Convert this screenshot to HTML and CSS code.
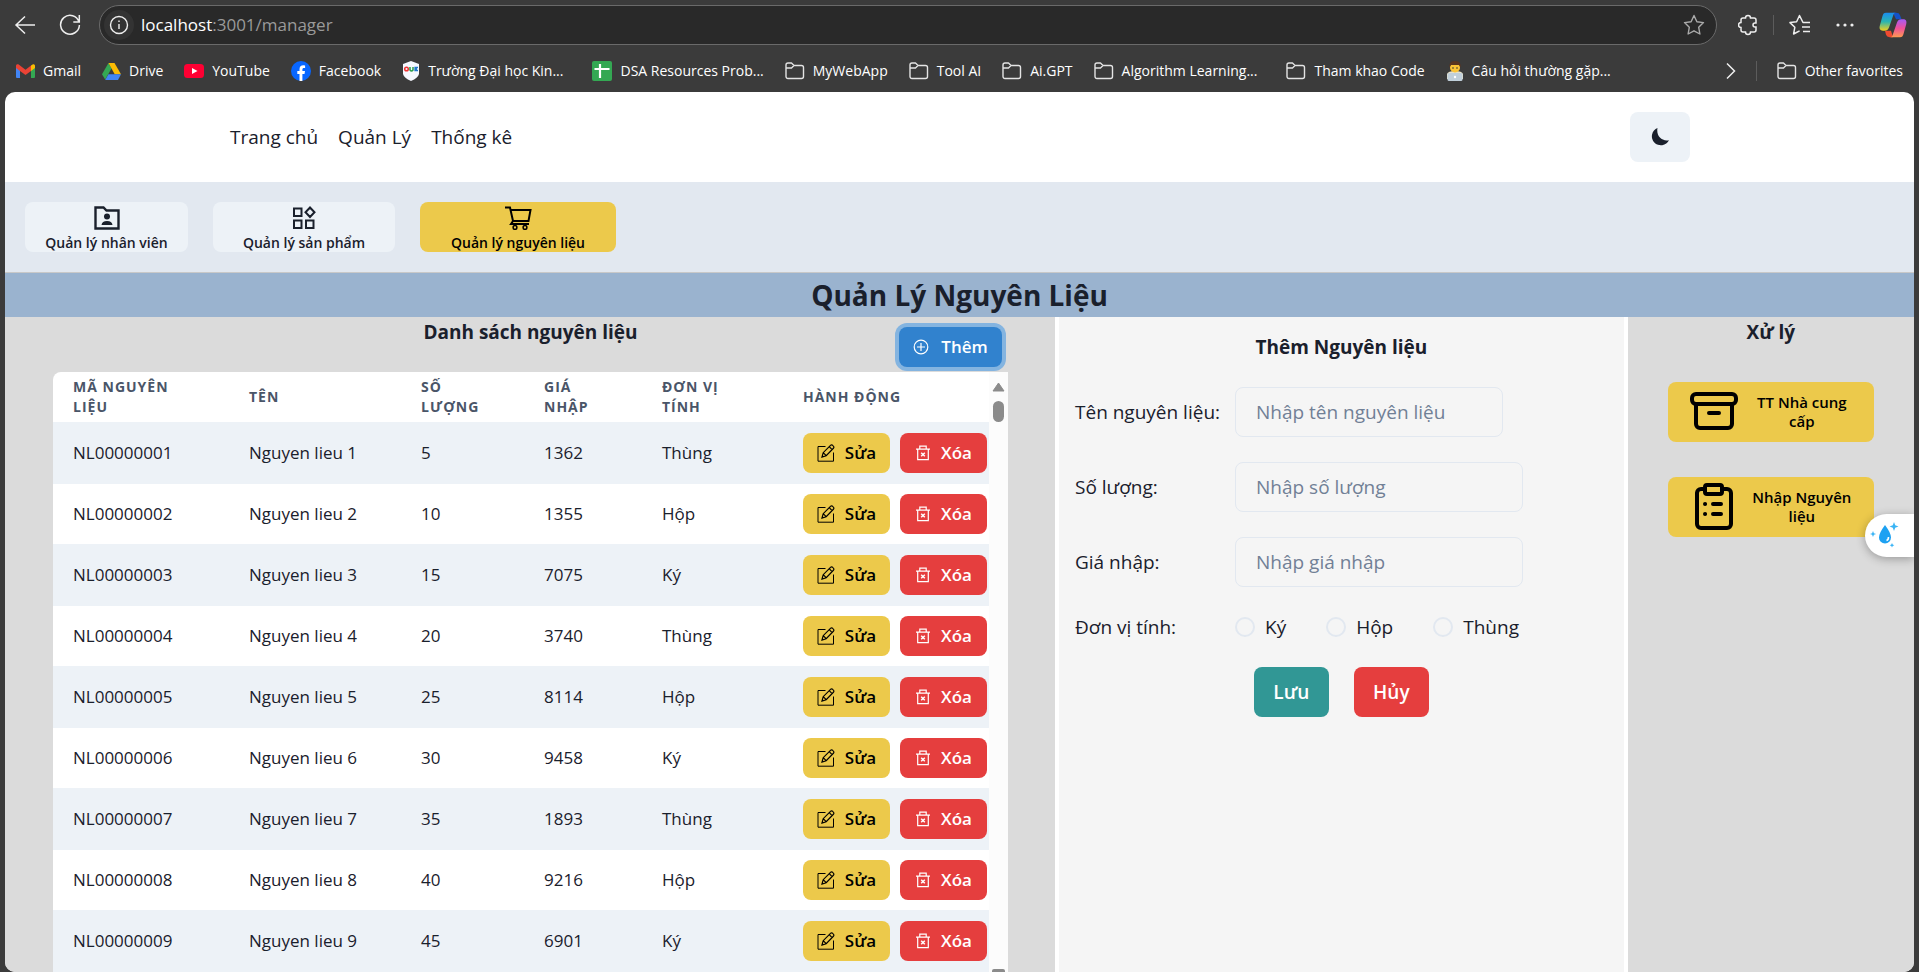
FILE: index.html
```html
<!DOCTYPE html>
<html lang="vi">
<head>
<meta charset="utf-8">
<title>Quản Lý Nguyên Liệu</title>
<link rel="stylesheet" href="styles.css">
</head>
<body>
<svg class="sprite" aria-hidden="true">
  <symbol id="folder" viewBox="0 0 20 20"><path d="M1 5.500V4a2 2 0 0 1 2-2h3.500L9 4.500h7.500a2 2 0 0 1 2 2v9a2 2 0 0 1-2 2H3a2 2 0 0 1-2-2zM1 7h5.500L9 4.500" fill="none" stroke="#e4e4e4" stroke-width="1.400" stroke-linejoin="round"/></symbol>
  <symbol id="edit" viewBox="0 0 18 18"><path d="M8.500 2.500H1v14.700h15.500V8.500" fill="none" stroke="currentColor" stroke-width="1"/><path d="M5 13l1.200-4.300 7.300-7.300a1.500 1.500 0 0 1 2.200 0l.7.700a1.500 1.500 0 0 1 0 2.200L9.200 11.700zM12.200 2.700l2.900 2.900M6.200 8.700l3 3" fill="none" stroke="currentColor" stroke-width="1.200"/></symbol>
  <symbol id="trash" viewBox="0 0 16 16"><path d="M1 4.200h14M4.800 4V1.200h6.400V4M2.700 4.500v10.200h10.600V4.500" fill="none" stroke="currentColor" stroke-width="1.200"/><path d="M6.200 7.700l3.600 3.600M9.800 7.700l-3.600 3.600" fill="none" stroke="currentColor" stroke-width="1.500"/></symbol>
</svg>

<header class="browser">
  <div class="toolbar">
    <button class="tool" aria-label="Back"><svg width="22" height="20" viewBox="0 0 22 20"><path d="M11 1.500 2 10l9 8.500M2 10h19" fill="none" stroke="#eee" stroke-width="1.500"/></svg></button>
    <button class="tool refresh" aria-label="Refresh"><svg width="22" height="22" viewBox="0 0 22 22"><path d="M20 8A9.400 9.400 0 1 0 20.400 11M20.300 1v7h-6" fill="none" stroke="#eee" stroke-width="1.500"/></svg></button>
    <div class="address">
      <svg width="30" height="30" viewBox="0 0 30 30"><circle cx="15" cy="15" r="15" fill="#333"/><circle cx="15" cy="15" r="8.500" fill="none" stroke="#eee" stroke-width="1.400"/><path d="M15 14v5M15 10.500v1.600" stroke="#eee" stroke-width="1.400"/></svg>
      <span class="url"><b>localhost</b>:3001/manager</span>
      <button class="tool" aria-label="Favorite"><svg width="22" height="22" viewBox="0 0 22 22"><path d="m11 1.500 2.900 6.200 6.600.9-4.800 4.700 1.200 6.700-5.900-3.200L5.100 20l1.200-6.700L1.500 8.600l6.600-.9z" fill="none" stroke="#aaa" stroke-width="1.400" stroke-linejoin="round"/></svg></button>
    </div>
    <button class="tool extensions" aria-label="Extensions"><svg width="20" height="22" viewBox="0 0 20 22"><path d="M5 4h2.500a2.500 2.500 0 0 1 5 0H16a2 2 0 0 1 2 2v3h-1a2 2 0 0 0 0 4h1v3a2 2 0 0 1-2 2h-3.500a2.500 2.500 0 0 1-5 0H5a2 2 0 0 1-2-2v-2.500a2.500 2.500 0 0 1 0-5V6a2 2 0 0 1 2-2z" fill="none" stroke="#eee" stroke-width="1.500"/></svg></button>
    <i class="rule"></i>
    <button class="tool" aria-label="Favorites"><svg width="22" height="22" viewBox="0 0 22 22"><path d="M21 8.500h-7L10.500 1.500 7.600 7.700 1 8.600l4.800 4.700-1.200 6.700 6-3.200M13 13h8M14 17.500h7" fill="none" stroke="#eee" stroke-width="1.500" stroke-linejoin="round"/></svg></button>
    <button class="tool apart" aria-label="Menu"><svg width="18" height="4" viewBox="0 0 18 4"><g fill="#eee"><circle cx="2" cy="2" r="1.600"/><circle cx="9" cy="2" r="1.600"/><circle cx="16" cy="2" r="1.600"/></g></svg></button>
    <button class="tool apart" aria-label="Copilot"><svg width="28" height="26" viewBox="0 0 28 32" preserveAspectRatio="none">
      <defs><linearGradient id="g1" x1="0" y1="0" x2="0" y2="1"><stop offset="0" stop-color="#1a8df0"/><stop offset=".5" stop-color="#2bb5b0"/><stop offset="1" stop-color="#f4d01c"/></linearGradient><linearGradient id="g2" x1="0" y1="0" x2="0" y2="1"><stop offset="0" stop-color="#a55af5"/><stop offset=".5" stop-color="#f0509a"/><stop offset="1" stop-color="#ff9a50"/></linearGradient></defs>
      <path d="M14 1h3a4 4 0 0 1 4 3l1.500 5H17z" fill="#1452c8"/><path d="M14 31h-3a4 4 0 0 1-4-3l-1-5h6z" fill="#f04a30"/>
      <path d="M7 1h10c-2 0-2.500 2-3 4l-4 14c-1 3-2 4-4.500 4H4c-3 0-4-2.500-3.200-6L3.500 5C4 2.500 5 1 7 1z" fill="url(#g1)"/>
      <path d="M21 31H11c2 0 2.500-2 3-4l4-14c1-3 2-4 4.500-4H24c3 0 4 2.500 3.200 6l-2.700 12c-.5 2.500-1.500 4-3.500 4z" fill="url(#g2)"/></svg></button>
  </div>
  <nav class="bookmarks" aria-label="Bookmarks">
    <a href="#"><svg width="19" height="14" viewBox="0 0 19 14"><path d="M0 2v11a1 1 0 0 0 1 1h3V5z" fill="#4285f4"/><path d="M19 2v11a1 1 0 0 1-1 1h-3V5z" fill="#34a853"/><path d="M15 1.500 17 .3c1-.5 2 .3 2 1.700v2l-4 3z" fill="#fbbc04"/><path d="M0 4V2C0 .3 1.500-.3 2.700.6L9.500 5.700 15 1.500V7l-5.500 4L4 7z" fill="#ea4335"/></svg>Gmail</a>
    <a href="#"><svg width="19" height="17" viewBox="0 0 19 17"><path d="M6.500 0 0 11.200 3.200 16.500 9.500 5.500z" fill="#34a853"/><path d="M6.500 0h6L19 11.200h-6.300z" fill="#fbbc04"/><path d="M19 11.200 16 17H3.200l3.200-5.800z" fill="#4285f4"/></svg>Drive</a>
    <a href="#"><svg width="20" height="14" viewBox="0 0 20 14"><rect width="20" height="14" rx="3.500" fill="#ff0033"/><path d="m8 4 5.500 3L8 10z" fill="#fff"/></svg>YouTube</a>
    <a href="#"><svg width="20" height="20" viewBox="0 0 20 20"><circle cx="10" cy="10" r="10" fill="#0866ff"/><path d="M8.500 20v-7H6.300v-3h2.200V8.200c0-2.800 1.300-4 4-4l1.600.2V7h-1.200c-1 0-1.500.5-1.500 1.500V10h2.600l-.5 3h-2.100v7z" fill="#fff"/></svg>Facebook</a>
    <a href="#"><svg width="18" height="20" viewBox="0 0 18 20"><path d="m9 0 8 3v10q-1 4-8 7-7-3-8-7V3z" fill="#f5f8ff"/><circle cx="4.500" cy="8" r="1.800" fill="none" stroke="#e33" stroke-width="1.500"/><path d="M8 6v3q1.500 2 3 0V6" fill="none" stroke="#2a9d4a" stroke-width="1.500"/><path d="M16 6.500h-3v3h3M13 8h2" fill="none" stroke="#27c" stroke-width="1.300"/></svg>Trường Đại học Kin...</a>
    <a href="#" class="wide"><svg width="20" height="20" viewBox="0 0 20 20"><rect width="20" height="20" rx="2" fill="#34a853"/><path d="M8 3v14M2.500 8h15" stroke="#fff" stroke-width="2.200"/></svg>DSA Resources Prob...</a>
    <a href="#"><svg width="20" height="20"><use href="#folder"/></svg>MyWebApp</a>
    <a href="#"><svg width="20" height="20"><use href="#folder"/></svg>Tool AI</a>
    <a href="#"><svg width="20" height="20"><use href="#folder"/></svg>Ai.GPT</a>
    <a href="#"><svg width="20" height="20"><use href="#folder"/></svg>Algorithm Learning...</a>
    <a href="#" class="wide"><svg width="20" height="20"><use href="#folder"/></svg>Tham khao Code</a>
    <a href="#"><svg width="18" height="20" viewBox="0 0 18 20"><path d="M1 18v-5q1-3 8-3t8 3v5z" fill="#e8e2c8"/><circle cx="9" cy="6.500" r="5" fill="#fcc436"/><path d="M3.500 6.500V4Q4 0 9 0t5.500 4v2.500L13 4H5z" fill="#5a3520"/><circle cx="7" cy="7" r=".8" fill="#333"/><circle cx="11" cy="7" r=".8" fill="#333"/><rect x="1.500" y="12" width="15" height="8" rx="1.500" fill="#c0cfda"/><circle cx="9" cy="16" r="1.200" fill="#fff"/></svg>Câu hỏi thường gặp...</a>
    <div class="bookmarks-end">
      <button class="tool" aria-label="More"><svg width="10" height="18" viewBox="0 0 10 18"><path d="m1 1.500 7.500 7.500L1 16.500" fill="none" stroke="#eee" stroke-width="1.500"/></svg></button>
      <i class="rule"></i>
      <a href="#"><svg width="20" height="20"><use href="#folder"/></svg>Other favorites</a>
    </div>
  </nav>
</header>

<div class="page">
  <header class="site-nav">
    <nav><a href="#">Trang chủ</a><a href="#">Quản Lý</a><a href="#">Thống kê</a></nav>
    <button class="theme" aria-label="Toggle theme"><svg width="20" height="20" viewBox="0 0 20 20"><path d="M7.500 1A9 9 0 1 0 19 13.200C11.500 14.500 6 9 7.500 1z" fill="#1a202c"/></svg></button>
  </header>
  <nav class="tabs" aria-label="Quản lý">
    <button class="tab tab-staff"><svg width="26" height="24" viewBox="0 0 26 24"><path d="M1.500 1.500h8l3 3h12v18h-23z" fill="none" stroke="#1a202c" stroke-width="2.400"/><circle cx="13" cy="10.500" r="3" fill="#1a202c"/><path d="M7.500 19q.5-4 5.500-4t5.500 4z" fill="#1a202c"/></svg>Quản lý nhân viên</button>
    <button class="tab tab-product"><svg width="24" height="24" viewBox="0 0 24 24"><path d="M2 2.500h7.500V10H2zM2 14.500h7.500V22H2zM14 14.500h7.500V22H14zM18 1.500l4.500 4.700L18 11l-4.500-4.800z" fill="none" stroke="#1a202c" stroke-width="2"/></svg>Quản lý sản phẩm</button>
    <button class="tab tab-material active"><svg width="28" height="24" viewBox="0 0 28 24"><path d="M1 1.500h5L9 15h15.500L26.500 4H7M9 15l-2 3h18" fill="none" stroke="#000" stroke-width="2"/><circle cx="11" cy="21.500" r="1.900" fill="none" stroke="#000" stroke-width="1.500"/><circle cx="21" cy="21.500" r="1.900" fill="none" stroke="#000" stroke-width="1.500"/></svg>Quản lý nguyên liệu</button>
  </nav>
  <h1>Quản Lý Nguyên Liệu</h1>
  <main class="columns">
    <section class="list">
      <div class="list-head">
        <h2>Danh sách nguyên liệu</h2>
        <button class="add"><svg width="16" height="16" viewBox="0 0 16 16"><g fill="none" stroke="#fff" stroke-width="1.200"><circle cx="8" cy="8" r="6.800"/><path d="M8 4v8M4 8h8"/></g></svg>Thêm</button>
      </div>
      <div class="table-box">
        <table>
          <colgroup><col class="c1"><col class="c2"><col class="c3"><col class="c4"><col class="c5"><col class="c6"></colgroup>
          <thead><tr><th>Mã nguyên liệu</th><th>Tên</th><th>Số lượng</th><th>Giá nhập</th><th>Đơn vị tính</th><th>Hành động</th></tr></thead>
          <tbody id="rows"></tbody>
        </table>
        <div class="scroll" aria-hidden="true"><svg width="13" height="10" viewBox="0 0 13 10"><path d="M6.500 1 12 9H1z" fill="#8b8b8b" stroke="#8b8b8b" stroke-linejoin="round"/></svg><i class="thumb"></i><i class="down"></i></div>
      </div>
    </section>
    <form class="form">
      <h2>Thêm Nguyên liệu</h2>
      <div class="field"><label for="ten">Tên nguyên liệu:</label><input class="short" id="ten" type="text" placeholder="Nhập tên nguyên liệu"></div>
      <div class="field"><label for="sl">Số lượng:</label><input id="sl" type="text" placeholder="Nhập số lượng"></div>
      <div class="field"><label for="gia">Giá nhập:</label><input id="gia" type="text" placeholder="Nhập giá nhập"></div>
      <div class="field units" role="radiogroup" aria-labelledby="dv"><span id="dv">Đơn vị tính:</span>
        <div class="radios"><label><input type="radio" name="u">Ký</label><label><input type="radio" name="u">Hộp</label><label><input type="radio" name="u">Thùng</label></div></div>
      <div class="actions"><button type="button" class="save">Lưu</button><button type="button" class="cancel">Hủy</button></div>
    </form>
    <aside class="side">
      <h2>Xử lý</h2>
      <button class="task"><svg width="48" height="48" viewBox="0 0 48 48"><g fill="none" stroke="#000" stroke-width="4" stroke-linecap="round" stroke-linejoin="round"><rect x="2" y="6" width="44" height="10" rx="4"/><path d="M6 17v19a4 4 0 0 0 4 4h28a4 4 0 0 0 4-4V17M19 25h10"/></g></svg><span>TT Nhà cung cấp</span></button>
      <button class="task"><svg width="48" height="48" viewBox="0 0 48 48"><g fill="none" stroke="#000" stroke-width="4" stroke-linecap="round" stroke-linejoin="round"><path d="M15 6h-4a4 4 0 0 0-4 4v31a4 4 0 0 0 4 4h26a4 4 0 0 0 4-4V10a4 4 0 0 0-4-4h-4"/><rect x="15" y="2" width="17" height="9" rx="2"/><path d="M15 21h.1M15 31h.1M23 21h8M23 31h8"/></g></svg><span>Nhập Nguyên liệu</span></button>
    </aside>
  </main>
  <button class="assistant" aria-label="Assistant"><svg width="32" height="28" viewBox="0 0 32 28"><path d="M17 3q6 8 6 12.500a6 6 0 0 1-12 0Q11 11 17 3z" fill="#1da1f2"/><path d="M20.500 15q0 3-2 3.500" fill="none" stroke="#fff" stroke-width="1.600"/><path d="m26 0 1.200 3.300L30.500 4.500l-3.300 1.200L26 9l-1.200-3.300-3.300-1.200 3.300-1.200zM5 9l.9 2.200 2.200.8-2.200.8L5 15l-.9-2.200L2 12l2.100-.8zM24 21l.7 1.600 1.600.7-1.600.7-.7 1.600-.7-1.600-1.600-.7 1.600-.7z" fill="#3ab4f5"/></svg></button>
</div>
<script src="rows.js"></script>
</body>
</html>
```

FILE: styles.css
```css
* { box-sizing: border-box; }
body {
  margin: 0;
  height: 100vh;
  display: flex;
  flex-direction: column;
  overflow: hidden;
  background: #3b3b3b;
  color: #1a202c;
  font: 19px/30px "Open Sans", "Noto Sans", sans-serif;
}
button, input { font: inherit; color: inherit; }
button { border: 0; padding: 0; display: flex; align-items: center; justify-content: center; cursor: pointer; }
a { color: inherit; text-decoration: none; }
h1, h2 { margin: 0; text-align: center; font-weight: 700; }
h2 { font-size: 19px; line-height: 30px; }
svg { flex: none; }
.sprite { position: absolute; width: 0; height: 0; }

.browser { flex: none; height: 92px; color: #fff; }
.toolbar { height: 50px; display: flex; align-items: center; gap: 15px; padding: 0 12px 0 14px; }
.tool { background: none; flex: none; }
.refresh { margin: 0 3px 0 8px; }
.extensions { margin-left: 6px; }
.apart { margin-left: 10px; }
.address {
  flex: 1;
  height: 40px;
  display: flex;
  align-items: center;
  gap: 7px;
  padding: 0 11px 0 4px;
  border: 1px solid #6a6a6a;
  border-radius: 20px;
  background: #292929;
}
.url { flex: 1; font-size: 17px; color: #9a9a9a; }
.url b { font-weight: 400; color: #fff; }
.rule { width: 1px; height: 20px; background: #5c5c5c; }
.bookmarks { height: 42px; display: flex; align-items: center; gap: 21px; padding: 0 16px; font-size: 14px; white-space: nowrap; }
.bookmarks a { display: flex; align-items: center; gap: 8px; }
.bookmarks .wide { margin-left: 8px; }
.bookmarks-end { margin-left: auto; display: flex; align-items: center; gap: 20px; }

.page {
  position: relative;
  flex: 1;
  min-height: 0;
  margin: 0 5px;
  display: flex;
  flex-direction: column;
  overflow: hidden;
  border-radius: 10px;
  background: #fff;
}
.site-nav { flex: none; height: 90px; display: flex; align-items: center; justify-content: space-between; padding: 0 224px 0 225px; }
.site-nav nav { display: flex; gap: 20px; }
.theme { width: 60px; height: 50px; border-radius: 8px; background: #edf2f7; }
.tabs { flex: none; display: flex; gap: 25px; padding: 20px; border-bottom: 1px solid #c8c8c8; background: #e2e8f0; }
.tab {
  height: 50px;
  flex-direction: column;
  justify-content: flex-start;
  padding-top: 4px;
  border-radius: 8px;
  background: #edf2f7;
  font-size: 14px;
  line-height: 26px;
  font-weight: 600;
}
.tab-staff { width: 163px; }
.tab-product { width: 182px; }
.tab-material { width: 196px; }
.active { background: #ecc94b; color: #000; }
h1 { flex: none; background: #9ab3cf; font-size: 28px; line-height: 44px; }

.columns { flex: 1; min-height: 0; display: grid; grid-template-columns: 55fr 30fr 15fr; }
.list { display: flex; flex-direction: column; min-height: 0; padding: 0 47px 0 48px; background: #dbdbdb; }
.list-head { position: relative; flex: none; height: 55px; }
.add {
  position: absolute;
  right: 6px;
  top: 10px;
  width: 103px;
  height: 40px;
  gap: 12px;
  border-radius: 8px;
  background: #3182ce;
  box-shadow: 0 0 0 4px #84b4e0;
  color: #fff;
  font-size: 17px;
  font-weight: 600;
}
.table-box { flex: 1; min-height: 0; display: flex; align-items: flex-start; overflow: hidden; border-top-left-radius: 8px; background: #fff; }
table { flex: 1; table-layout: fixed; width: 100%; border-collapse: collapse; text-align: left; }
.c1 { width: 176px; }
.c2 { width: 172px; }
.c3 { width: 123px; }
.c4 { width: 118px; }
.c5 { width: 141px; }
.c6 { width: 206px; }
th { height: 50px; padding: 0 36px 0 20px; color: #4a5568; font-size: 14px; line-height: 20px; font-weight: 700; text-transform: uppercase; letter-spacing: 1px; }
td { height: 60px; padding: 0 0 0 20px; font-size: 17px; }
tbody tr:nth-child(odd) td { height: 62px; background: #edf2f7; }
.row-actions { display: flex; gap: 10px; }
.row-actions button { width: 87px; height: 40px; gap: 10px; border-radius: 8px; font-size: 17px; font-weight: 600; }
.row-actions .edit { background: #ecc94b; color: #000; }
.row-actions .del { background: #e53e3e; color: #fff; }
.scroll { flex: none; align-self: stretch; width: 19px; display: flex; flex-direction: column; align-items: center; padding-top: 10px; background: #fcfcfc; }
.thumb { width: 11px; height: 21px; margin-top: 9px; border-radius: 6px; background: #8b8b8b; }
.down { width: 13px; height: 3px; margin-top: auto; border-radius: 2px 2px 0 0; background: #8b8b8b; }

.form { padding: 15px 16px; border: solid #fff; border-width: 0 4px; background: #f5f5f5; }
.form h2 { margin-bottom: 25px; }
.field { display: grid; grid-template-columns: 160px 1fr; align-items: center; height: 50px; margin-bottom: 25px; }
.field > input { width: 288px; height: 50px; padding: 0 20px; border: 1px solid #e2e8f0; border-radius: 8px; background: transparent; }
.field > .short { width: 268px; }
input::placeholder { color: #718096; opacity: 1; }
.units { height: 30px; }
.radios { display: flex; gap: 40px; }
.radios label { display: flex; align-items: center; gap: 10px; }
.radios input { appearance: none; width: 20px; height: 20px; margin: 0; border: 2px solid #e2e8f0; border-radius: 50%; }
.actions { display: flex; gap: 25px; justify-content: center; }
.actions button { width: 75px; height: 50px; border-radius: 8px; color: #fff; font-size: 19px; font-weight: 600; }
.save { background: #319795; }
.cancel { background: #e53e3e; }

.side { display: flex; flex-direction: column; gap: 35px; padding: 0 40px; background: #dbdbdb; }
.task { height: 60px; gap: 8px; padding: 0 16px 0 22px; border-radius: 8px; background: #ecc94b; color: #000; font-size: 15px; line-height: 19px; font-weight: 600; }
.task span { flex: 1; }
.assistant { position: absolute; right: 0; top: 422px; width: 49px; height: 43px; padding-right: 12px; border-radius: 22px 0 0 22px; background: #fff; box-shadow: 0 2px 10px rgba(0, 0, 0, .3); }
```

FILE: rows.js
```js
const prices = [1362, 1355, 7075, 3740, 8114, 9458, 1893, 9216, 6901];
const units = ["Thùng", "Hộp", "Ký", "Thùng", "Hộp", "Ký", "Thùng", "Hộp", "Ký"];
document.getElementById("rows").innerHTML = prices.map((price, i) => `
  <tr><td>NL0000000${i + 1}</td><td>Nguyen lieu ${i + 1}</td><td>${(i + 1) * 5}</td><td>${price}</td><td>${units[i]}</td>
  <td><div class="row-actions">
    <button class="edit"><svg width="18" height="18"><use href="#edit"/></svg>Sửa</button>
    <button class="del"><svg width="16" height="16"><use href="#trash"/></svg>Xóa</button>
  </div></td></tr>`).join("");
```
